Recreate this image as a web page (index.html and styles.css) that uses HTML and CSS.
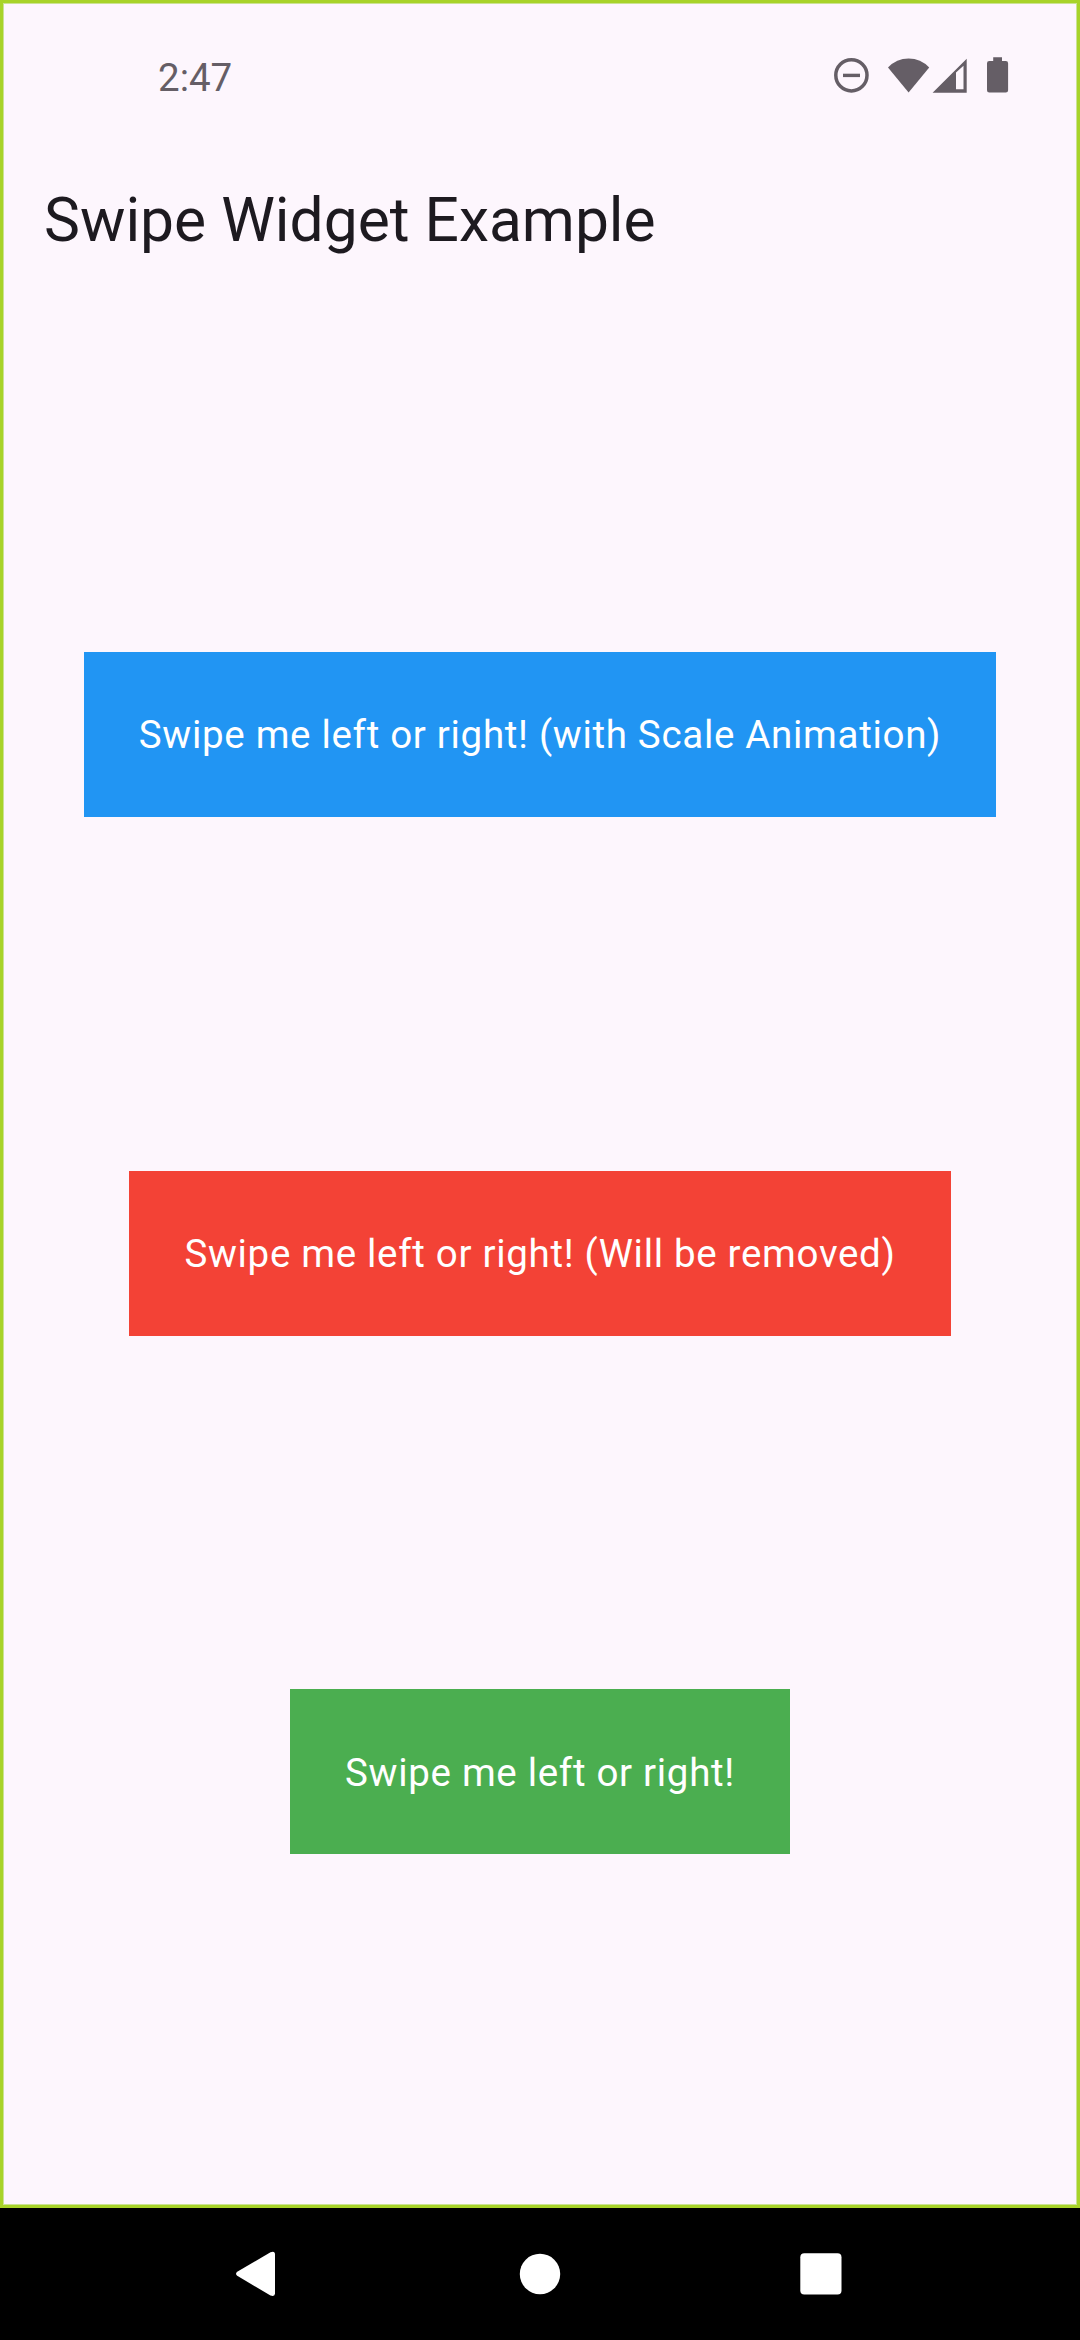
FILE: index.html
```html
<!DOCTYPE html>
<html lang="en">
<head>
<meta charset="utf-8">
<title>Swipe Widget Example</title>
<link rel="stylesheet" href="styles.css">
</head>
<body>
<div class="screen">
  <header class="status-bar">
    <span class="clock">2:47</span>
    <svg class="status-icons" width="176" height="40" viewBox="833 55 176 40">
      <circle cx="851.4" cy="75.3" r="15.6" fill="none" stroke="#655e66" stroke-width="3.5"/>
      <path d="M843 73.7h17v3.4h-17z"/>
      <path d="M908.6 92.4 888 67.4Q896.500 58.400 908.600 58.400T929.200 67.400Z"/>
      <path fill-rule="evenodd" d="M932.600 92.700 966.700 58.700V92.700ZM956 72.500V89.200H963.500V65.800Z"/>
      <path d="M993.200 57.300h8.800v3.700h3.800q2.300 0 2.300 2.300v26.900q0 2.300-2.300 2.300h-16.500q-2.300 0-2.300-2.300v-26.900q0-2.300 2.300-2.300h3.900z"/>
    </svg>
  </header>
  <h1 class="app-title">Swipe Widget Example</h1>
  <main class="cards">
    <div class="card card-blue">Swipe me left or right! (with Scale Animation)</div>
    <div class="card card-red">Swipe me left or right! (Will be removed)</div>
    <div class="card card-green">Swipe me left or right!</div>
  </main>
</div>
<nav class="nav-bar">
  <svg width="44" height="46" viewBox="0 0 44 46"><path d="M1.200 20.800 34.500 1.200Q39 -0.500 39 3.500V42.500Q39 46 34.500 44.500L1.200 24.800Q-1.200 22.800 1.200 20.800Z"/></svg>
  <svg width="42" height="42" viewBox="0 0 42 42"><circle cx="21" cy="21" r="20.2"/></svg>
  <svg width="42" height="42" viewBox="0 0 42 42"><rect x=".3" y=".3" width="41.200" height="41.200" rx="4"/></svg>
</nav>
</body>
</html>
```
FILE: styles.css
```css
* {
  box-sizing: border-box;
}

body {
  margin: 0;
  width: 1080px;
  height: 2340px;
  display: flex;
  flex-direction: column;
  background: #000;
  font-family: Roboto, "Liberation Sans", sans-serif;
}

.screen {
  height: 2208px;
  display: flex;
  flex-direction: column;
  background: #fdf6fd;
  box-shadow: inset 0 0 0 3px #a8d32a, inset 0 0 0 4px #cbe394;
}

.status-bar {
  height: 144px;
  padding: 0 71px 0 158px;
  display: flex;
  justify-content: space-between;
  color: #655e66;
}

.clock {
  margin-top: 55px;
  font-size: 38.5px;
  line-height: 45px;
}

.status-icons {
  margin-top: 55px;
  fill: #655e66;
}

.app-title {
  height: 154px;
  margin: 0;
  padding-left: 44px;
  font-size: 60.5px;
  font-weight: 400;
  line-height: 154px;
  color: #1d1a20;
}

.cards {
  flex: 1;
  display: flex;
  flex-direction: column;
  align-items: center;
  justify-content: space-evenly;
}

.card {
  padding: 55.5px 55px 54.5px;
  font-size: 38.5px;
  line-height: 55px;
  letter-spacing: 0.6875px;
  white-space: nowrap;
  color: #fff;
}

.card-blue {
  background: #2195f3;
}

.card-red {
  background: #f34236;
}

.card-green {
  background: #4bae50;
}

.nav-bar {
  height: 132px;
  padding: 0 238px 0 236px;
  display: flex;
  align-items: center;
  justify-content: space-between;
  fill: #fff;
}
```
